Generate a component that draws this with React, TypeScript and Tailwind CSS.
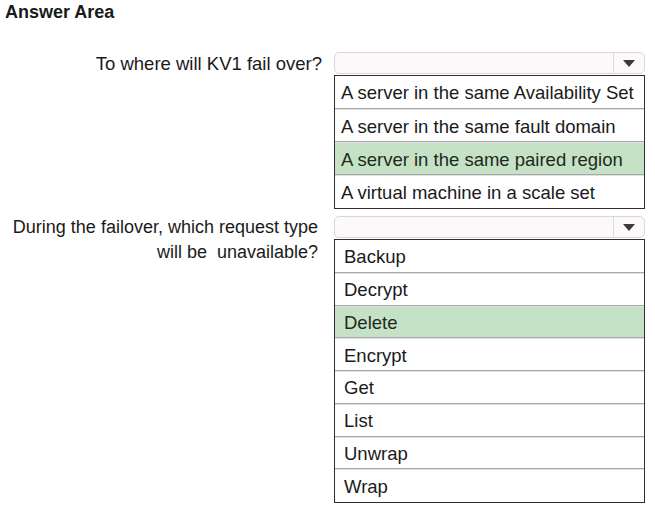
import React from 'react';

type Question = {
  label: string[];
  options: string[];
  answer: string;
  indent: string;
  rowHeight: string;
  labelStyle: string;
};

const questions: Question[] = [
  {
    label: ['To where will KV1 fail over?'],
    options: [
      'A server in the same Availability Set',
      'A server in the same fault domain',
      'A server in the same paired region',
      'A virtual machine in a scale set',
    ],
    answer: 'A server in the same paired region',
    indent: 'pl-[6px]',
    rowHeight: 'h-[33px]',
    labelStyle: 'pr-0',
  },
  {
    label: ['During the failover, which request type', 'will be\u00a0 unavailable?'],
    options: ['Backup', 'Decrypt', 'Delete', 'Encrypt', 'Get', 'List', 'Unwrap', 'Wrap'],
    answer: 'Delete',
    indent: 'pl-[9px]',
    rowHeight: 'h-[32.75px]',
    labelStyle: 'pr-[4px] text-[18px]',
  },
];

const SelectBox = () => (
  <div className="flex h-[22px] rounded-[5px] border border-[#d8d8d8] bg-[#fdf9f9]">
    <div className="flex-1" />
    <div className="flex w-[31px] items-center justify-center border-l border-[#dcdcdc]">
      <svg width="12" height="7" viewBox="0 0 12 7">
        <path d="M0 0 L12 0 L6 7 Z" fill="#3a3a3a" />
      </svg>
    </div>
  </div>
);

const OptionList = ({ q }: { q: Question }) => (
  <div className="mt-[1px] border border-[#2e2e2e] bg-white">
    {q.options.map((opt, i) => (
      <div
        key={opt}
        className={`flex items-center border-b border-[#a8a8a8] pt-[1px] ${q.rowHeight} ${q.indent} ${
          i > 0 ? 'border-t border-t-[#e2e2e2]' : ''
        } ${opt === q.answer ? 'bg-[#c6e2c6] text-[#1c2a1c]' : 'text-[#1a1a1a]'} ${
          i === q.options.length - 1 ? 'border-b-0' : ''
        }`}
      >
        {opt}
      </div>
    ))}
  </div>
);

export default function App() {
  return (
    <div
      className="h-[510px] w-[655px] bg-white text-[18.5px] leading-[25px] text-[#1a1a1a]"
      style={{ fontFamily: '"Liberation Sans", Arial, sans-serif' }}
    >
      <div className="pl-[5px] pt-0 text-[18px] font-bold">Answer Area</div>
      <div className="mt-[27px] flex flex-col gap-[7px]">
        {questions.map((q) => (
          <div key={q.label[0]} className="grid grid-cols-[322px_311px] gap-x-[12px]">
            <div className={`-mt-[1px] text-right ${q.labelStyle}`}>
              {q.label.map((line) => (
                <div key={line}>{line}</div>
              ))}
            </div>
            <div>
              <SelectBox />
              <OptionList q={q} />
            </div>
          </div>
        ))}
      </div>
    </div>
  );
}
